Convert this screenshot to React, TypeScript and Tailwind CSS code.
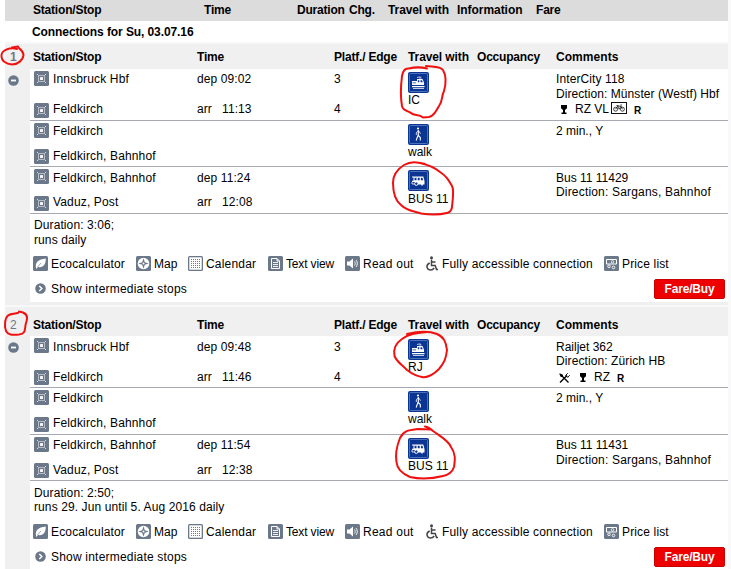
import type { ReactNode } from "react";
import clsx from "clsx";

type Vehicle = "train" | "walk" | "bus";

interface Segment {
  from: string;
  to: string;
  dep?: string;
  arr?: string;
  platforms?: [string, string];
  vehicle: Vehicle;
  label: string;
  labelClass?: string;
  comments: ReactNode;
  height: string;
  /** Drop the first / last text line by one extra pixel */
  lowFirst?: boolean;
  lowLast?: boolean;
}

interface Connection {
  no: string;
  noClass: string;
  headHeight: string;
  segments: Segment[];
  duration: string;
  runs: string;
  summaryClass: string;
}

function StationIcon() {
  return (
    <svg className="h-[15px] w-[15px] shrink-0" viewBox="0 0 15 15">
      <rect width="15" height="15" rx="1.5" fill="#6b788a" />
      <path d="M3 3l2 2M12 3l-2 2M3 12l2-2M12 12l-2-2" stroke="#d5dae0" />
      <rect x="4.500" y="4.500" width="6" height="6" fill="none" stroke="#b4bbc5" />
      <rect x="5" y="5" width="5" height="5" fill="#6b788a" />
      <rect x="6" y="6" width="3" height="3" rx="0.600" fill="#f2f4f6" />
    </svg>
  );
}

function VehicleIcon({ type }: { type: Vehicle }) {
  return (
    <svg className="block h-[21px] w-[21px]" viewBox="0 0 21 21">
      <rect width="21" height="21" rx="2" fill="#0a3592" />
      <rect x="1.500" y="1.500" width="18" height="18" rx="1" fill="none" stroke="#5f83c4" strokeWidth="0.800" />
      {type === "train" && (
        <g>
          <path d="M9 5.500l3-.7 1.500 1.200M12 5v2" fill="none" stroke="#dfe7f5" strokeWidth="0.800" />
          <path d="M4 9h5V7h5.500l1.500 3.500V13H4z" fill="#fff" />
          <path d="M9.800 8.300h1.500v2H9.800zM12.500 8.300h1.500l.8 2h-2.300zM4.500 10.500H8v.7H4.500z" fill="#0a3592" />
          <path d="M4 14h12.500v1.200H4zM5 16.200h11v.9H5z" fill="#fff" />
        </g>
      )}
      {type === "walk" && (
        <g stroke="#fff" fill="none" strokeWidth="1.100">
          <circle cx="10" cy="4.500" r="1.100" fill="#fff" stroke="none" />
          <path d="M10.300 6v5.500l2 2v3M10.200 11l-1.200 3-.8 2.500" />
          <path d="M10 6.700L8.300 9v2M10.800 7l1.700 2.700" strokeWidth="0.800" />
        </g>
      )}
      {type === "bus" && (
        <g>
          <path d="M4 6.500h11.300l1.200 4.500v3.500H9.500V12H4v-1.200h1.500V7.500H4z" fill="#fff" />
          <path d="M6.500 7.700h2v2.600h-2zM9.700 7.700h2v2.600h-2zM12.900 7.700h1.500l.8 2.600h-2.300z" fill="#0a3592" />
          <path d="M4 12v2h2.500" fill="none" stroke="#fff" strokeWidth="0.800" />
          <circle cx="8.300" cy="13.700" r="1.700" fill="#0a3592" stroke="#fff" />
          <circle cx="14" cy="14.700" r="0.900" fill="#fff" />
        </g>
      )}
    </svg>
  );
}

function GlassIcon() {
  return (
    <svg className="h-[9px] w-[8px]" viewBox="0 0 8 9">
      <path d="M1 0h6v3.300L5 5v2.500h1.500V9h-5V7.500H3V5L1 3.300z" />
    </svg>
  );
}

function CutleryIcon() {
  return (
    <svg className="h-[10px] w-[11px]" viewBox="0 0 11 10">
      <path d="M1 9.500L8 2.500M2.500 2.500l7 7" stroke="#000" strokeWidth="1.400" />
      <path d="M.8 .8l1.200 3 2-1.500zM6.500 2.500l2.300-2.300M8.500 4.500l2.300-2.300M6.800 2.300l2 2" stroke="#000" strokeWidth="0.900" />
    </svg>
  );
}

function BikeIcon() {
  return (
    <svg className="block h-[12px] w-[16px]" viewBox="0 0 16 12" fill="none" stroke="#111">
      <rect x="0.500" y="0.500" width="15" height="11" />
      <g strokeWidth="0.800">
        <circle cx="4.600" cy="7.200" r="2" />
        <circle cx="11.400" cy="7.200" r="2" />
        <path d="M4.600 7.200l2-3h3.400l1.400 3M6.600 4.200l1.600 3 1.800-3M5.500 3.500h2M9.500 3h1.500" />
      </g>
    </svg>
  );
}

function ToolIcon({ children }: { children: ReactNode }) {
  return (
    <svg className="h-[15px] w-[15px] shrink-0" viewBox="0 0 15 15">
      <rect width="15" height="15" rx="1.500" fill="#6b788a" />
      {children}
    </svg>
  );
}

const TOOLS: { label: string; width: string; gap: string; icon: ReactNode }[] = [
  {
    label: "Ecocalculator",
    width: "w-[103px]",
    gap: "gap-[3px] tracking-[0.15px]",
    icon: (
      <ToolIcon>
        <path d="M3 11.500C2 7 5 3.200 12.800 2.500 12.800 8 10.500 12 5 11l-2 2z" fill="#fff" />
        <path d="M4.500 11l3.500-4" stroke="#6b788a" strokeWidth="0.600" />
      </ToolIcon>
    ),
  },
  {
    label: "Map",
    width: "w-[52px]",
    gap: "gap-[3px]",
    icon: (
      <ToolIcon>
        <circle cx="7.500" cy="7.500" r="5.800" fill="#fff" />
        <path d="M7.500 2.300l1.300 3.900 3.900 1.300-3.900 1.300-1.300 3.900-1.300-3.900-3.900-1.300 3.900-1.300z" fill="#6b788a" />
        <circle cx="7.500" cy="7.500" r="1" fill="#fff" />
      </ToolIcon>
    ),
  },
  {
    label: "Calendar",
    width: "w-[80px]",
    gap: "gap-[3px] tracking-[0.2px]",
    icon: (
      <ToolIcon>
        <rect x="1.300" y="1.300" width="12.400" height="12.400" fill="#fff" />
        <path
          d="M3 3.500h10M3 5.500h10M3 7.500h10M3 9.500h10M3 11.500h10"
          stroke="#6b788a"
          strokeDasharray="1 1"
          shapeRendering="crispEdges"
        />
      </ToolIcon>
    ),
  },
  {
    label: "Text view",
    width: "w-[77px]",
    gap: "gap-[3px] tracking-[-0.15px]",
    icon: (
      <ToolIcon>
        <path d="M3.500 2.500h5.500l2.500 2.500v7.500h-8zM9 2.500V5h2.500" fill="none" stroke="#fff" />
        <path d="M5 6.500h5M5 8.500h5M5 10.500h5" stroke="#fff" strokeWidth="0.900" />
      </ToolIcon>
    ),
  },
  {
    label: "Read out",
    width: "w-[81px]",
    gap: "gap-[3px] tracking-[0.25px]",
    icon: (
      <ToolIcon>
        <path d="M2 5.500h2.500L8 2.500v10l-3.500-3H2z" fill="#fff" />
        <path d="M9.500 5.500c1 1.300 1 2.700 0 4M11 4c1.800 2.300 1.800 4.700 0 7" fill="none" stroke="#fff" strokeWidth="0.900" />
      </ToolIcon>
    ),
  },
  {
    label: "Fully accessible connection",
    width: "w-[178px]",
    gap: "gap-[4px] tracking-[0.18px]",
    icon: (
      <svg className="h-[15px] w-[12px] shrink-0" viewBox="0 0 12 15" fill="none" stroke="#444" strokeWidth="1.500">
        <circle cx="5.500" cy="1.700" r="1.500" fill="#444" stroke="none" />
        <path d="M5.500 3.500v6h3.700l1.300 4h1.500M5.500 6h4" />
        <path d="M3.700 7C1.500 8 .7 10 1.200 11.800c.8 2.700 5 3.200 7 .2" />
      </svg>
    ),
  },
  {
    label: "Price list",
    width: "w-[70px]",
    gap: "gap-[3px] tracking-[0.15px]",
    icon: (
      <ToolIcon>
        <path d="M2.500 3.500h10v4.500h-10z" fill="none" stroke="#fff" />
        <circle cx="8.500" cy="5.800" r="1.200" fill="none" stroke="#fff" strokeWidth="0.800" />
        <circle cx="5" cy="10.300" r="1.300" fill="#6b788a" stroke="#fff" strokeWidth="0.900" />
        <circle cx="9.500" cy="11.500" r="1.300" fill="#6b788a" stroke="#fff" strokeWidth="0.900" />
      </ToolIcon>
    ),
  },
];

const CONNECTIONS: Connection[] = [
  {
    no: "1",
    noClass: "font-bold",
    headHeight: "h-[25px] pt-[6px]",
    duration: "Duration: 3:06;",
    runs: "runs daily",
    summaryClass: "pt-[4px]",
    segments: [
      {
        from: "Innsbruck Hbf",
        to: "Feldkirch",
        dep: "09:02",
        arr: "11:13",
        platforms: ["3", "4"],
        vehicle: "train",
        label: "IC",
        height: "h-[52px]",
        comments: (
          <>
            <div className="tracking-[0.1px]">InterCity 118</div>
            <div className="tracking-[0.07px]">Direction: Münster (Westf) Hbf</div>
            <div className="flex h-[15px] items-center pl-[4px]">
              <GlassIcon />
              <span className="ml-[7px]">RZ VL</span>
              <span className="mb-[4px] ml-[2px]"><BikeIcon /></span>
              <b className="mt-px ml-[7px] text-[10px]">R</b>
            </div>
          </>
        ),
      },
      {
        from: "Feldkirch",
        to: "Feldkirch, Bahnhof",
        vehicle: "walk",
        label: "walk",
        comments: "2 min., Y",
        height: "h-[46px]",
        lowLast: true,
      },
      {
        from: "Feldkirch, Bahnhof",
        to: "Vaduz, Post",
        dep: "11:24",
        arr: "12:08",
        vehicle: "bus",
        label: "BUS 11",
        labelClass: "pt-px",
        height: "h-[47px]",
        lowFirst: true,
        comments: (
          <>
            <div>Bus 11 11429</div>
            <div className="-mt-px tracking-[0.18px]">Direction: Sargans, Bahnhof</div>
          </>
        ),
      },
    ],
  },
  {
    no: "2",
    noClass: "font-normal",
    headHeight: "h-[29px] pt-[11px]",
    duration: "Duration: 2:50;",
    runs: "runs 29. Jun until 5. Aug 2016 daily",
    summaryClass: "pt-[5px] pb-[2px] leading-[14px]",
    segments: [
      {
        from: "Innsbruck Hbf",
        to: "Feldkirch",
        dep: "09:48",
        arr: "11:46",
        platforms: ["3", "4"],
        vehicle: "train",
        label: "RJ",
        height: "h-[52px]",
        lowFirst: true,
        lowLast: true,
        comments: (
          <>
            <div>Railjet 362</div>
            <div className="-mt-px tracking-[0.1px]">Direction: Zürich HB</div>
            <div className="mt-px flex h-[15px] items-center pl-[3px]">
              <CutleryIcon />
              <span className="ml-[9px]"><GlassIcon /></span>
              <span className="ml-[7px]">RZ</span>
              <b className="mt-px ml-[7px] text-[10px]">R</b>
            </div>
          </>
        ),
      },
      {
        from: "Feldkirch",
        to: "Feldkirch, Bahnhof",
        vehicle: "walk",
        label: "walk",
        comments: "2 min., Y",
        height: "h-[47px]",
      },
      {
        from: "Feldkirch, Bahnhof",
        to: "Vaduz, Post",
        dep: "11:54",
        arr: "12:38",
        vehicle: "bus",
        label: "BUS 11",
        height: "h-[46px]",
        lowLast: true,
        comments: (
          <>
            <div>Bus 11 11431</div>
            <div className="tracking-[0.18px]">Direction: Sargans, Bahnhof</div>
          </>
        ),
      },
    ],
  },
];

const COLS = "grid grid-cols-[167px_137px_74px_69px_79px_172px]";

function Stop({ name, textClass }: { name: string; textClass: string }) {
  return (
    <div className="flex h-[15px] items-start gap-1">
      <StationIcon />
      <span className={clsx("tracking-[0.15px]", textClass)}>{name}</span>
    </div>
  );
}

function SegmentRow({ segment }: { segment: Segment }) {
  const top = segment.lowFirst ? "pt-[4px]" : "pt-[3px]";
  const bottom = segment.lowLast ? "pb-[2px]" : "pb-[3px]";

  return (
    <div className={clsx(COLS, "border-b border-[#a6a9b4]", segment.height)}>
      <div className="flex flex-col justify-between py-[2px] pl-[4px]">
        <Stop name={segment.from} textClass={segment.lowFirst ? "mt-[2px]" : "mt-px"} />
        <Stop name={segment.to} textClass={segment.lowLast ? "mt-0" : "-mt-px"} />
      </div>
      <div className={clsx("flex flex-col justify-between tracking-[0.1px]", top, bottom)}>
        {segment.dep && <div>dep {segment.dep}</div>}
        {segment.arr && (
          <div className="flex">
            <span className="w-[25px]">arr</span>
            {segment.arr}
          </div>
        )}
      </div>
      <div className={clsx("flex flex-col justify-between", top, bottom)}>
        {segment.platforms?.map((p) => <div key={p}>{p}</div>)}
      </div>
      <div className="pt-[3px]">
        <VehicleIcon type={segment.vehicle} />
        <div className={clsx("leading-[14px]", segment.labelClass)}>{segment.label}</div>
      </div>
      <div />
      <div className={clsx("whitespace-nowrap", top)}>{segment.comments}</div>
    </div>
  );
}

function ConnectionCard({ connection }: { connection: Connection }) {
  return (
    <section>
      <div className={clsx("flex bg-[#f0f0f0] font-bold tracking-[-0.2px]", connection.headHeight)}>
        <div className={clsx("w-[25px] pl-[5px] text-[#6b788a]", connection.noClass)}>{connection.no}</div>
        <div className={COLS}>
          <div className="pl-[3px]">Station/Stop</div>
          <div>Time</div>
          <div>Platf./ Edge</div>
          <div className="tracking-[-0.1px] whitespace-nowrap">Travel with</div>
          <div>Occupancy</div>
          <div className="tracking-[0.05px]">Comments</div>
        </div>
      </div>
      <div className="flex">
        <div className="w-[25px] shrink-0 bg-[#f0f0f0] pt-[6px] pl-[3px]">
          <svg className="h-[11px] w-[11px]" viewBox="0 0 11 11">
            <circle cx="5.500" cy="5.500" r="5.300" fill="#6b788a" />
            <path d="M3 5.500h5" stroke="#fff" strokeWidth="1.800" />
          </svg>
        </div>
        <div className="h-[233px] w-[698px] bg-white">
          {connection.segments.map((s) => <SegmentRow key={s.vehicle} segment={s} />)}
          <div className={clsx("pl-[4px] tracking-[0.1px]", connection.summaryClass)}>
            <div>{connection.duration}</div>
            <div>{connection.runs}</div>
          </div>
          <div className="mt-[8px] flex h-[15px] pl-[3px] whitespace-nowrap">
            {TOOLS.map((t) => (
              <div key={t.label} className={clsx("flex shrink-0", t.width, t.gap)}>
                {t.icon}
                <span className="mt-px">{t.label}</span>
              </div>
            ))}
          </div>
          <div className="mt-[8px] flex items-start justify-between pr-[3px] pl-[5px]">
            <div className="mt-[3px] flex items-start gap-[5px] tracking-[0.2px]">
              <svg className="mt-px h-[11px] w-[11px]" viewBox="0 0 11 11">
                <circle cx="5.500" cy="5.500" r="5.300" fill="#6b788a" />
                <path d="M4.300 3l2.500 2.500L4.300 8" stroke="#fff" strokeWidth="1.500" fill="none" />
              </svg>
              Show intermediate stops
            </div>
            <button className="flex h-[20px] w-[71px] items-center justify-center rounded-[2px] border border-[#c80000] bg-[#ee0000] font-bold tracking-[-0.2px] text-white">
              Fare/Buy
            </button>
          </div>
        </div>
      </div>
    </section>
  );
}

// Hand-drawn red marks over the numbers and vehicle icons
function Marks() {
  return (
    <svg
      className="pointer-events-none absolute top-0 left-0 h-[569px] w-[731px]"
      viewBox="0 0 731 569"
      fill="none"
      stroke="#f01010"
      strokeWidth="2"
      strokeLinecap="round"
      strokeLinejoin="round"
    >
      <path d="M17 49C10 47 2 50 1.500 55C1 61 6 64 12 64.500C18 64.500 23 60 23.500 55C23 49 18 49 18 46.500L12 47.500" />
      <path d="M19 311.500L23 312.500C29 315 27 320 25.500 325C25 332 24 334 19 334.500C12 335 8 335 6 331C4 326 5 318 8 315.500C10 313.500 14 314 18 313" />
      <path d="M426 66C434 67 440 66 443 70C447 77 446 84 444 91C441 97 443 101 439 106C435 113 433 116 429 117L423 117.500C419 114 414 116 411 113C405 110 403 110 402 106C400 95 401 84 402 76C403 70 405 68 409 68.500C415 67 421 67 427 68.500" />
      <path d="M425 164C417 162 411 161 404 165C396 170 393 176 393 183C393 193 396 201 401 205C407 211 414 211 421 213.500C431 215 439 215 447 213C452 212 452 208 452.500 202C453 195 454 190 452 186C448 179 446 176 440 172C434 167 429 165 420 163" />
      <path d="M407 334C419 331 430 331 437 334C444 337 446 342 447 350C446 359 444 363 439 369C434 374 428 378 422 377C415 376 411 373 407 370C401 364 397 362 394.500 356C393 348 396 343 402 339C408 334 416 333 427 332" />
      <path d="M425 426.500C429 427 431 429 433 431C441 437 448 440 451 447C456 454 455 460 454 467C452 473 448 475 443 476C431 479 419 479 410 477C403 474 397 469 396.500 462C395 453 398 443 400 438C404 430 410 430 418 429L431 429.500" />
    </svg>
  );
}

export default function App() {
  return (
    <div className="relative flex h-[569px] w-[731px] overflow-hidden bg-[#f9f9f9] font-['Liberation_Sans',Arial,sans-serif] text-[12px] leading-[15px] text-black">
      <div className="w-[5px] shrink-0 bg-white" />
      <main className="w-[723px] shrink-0">
        <div className="flex h-[21px] bg-[#dcdcdc] pt-[3px] pl-[28px] font-bold tracking-[-0.2px] whitespace-nowrap">
          <div className="w-[171px]">Station/Stop</div>
          <div className="w-[93px]">Time</div>
          <div className="w-[52px]">Duration</div>
          <div className="w-[39px]">Chg.</div>
          <div className="w-[69px] tracking-[-0.1px]">Travel with</div>
          <div className="w-[79px] tracking-[-0.05px]">Information</div>
          <div>Fare</div>
        </div>
        <div className="h-[21px] bg-white pt-[4px] pl-[27px] font-bold tracking-[-0.09px]">
          Connections for Su, 03.07.16
        </div>
        <div className="h-[2px] bg-[#f8f8f8]" />
        <ConnectionCard connection={CONNECTIONS[0]} />
        <div className="h-[3px] bg-[#f0f0f0]" />
        <div className="h-[2px] bg-[#f8f8f8]" />
        <ConnectionCard connection={CONNECTIONS[1]} />
      </main>
      <Marks />
    </div>
  );
}
